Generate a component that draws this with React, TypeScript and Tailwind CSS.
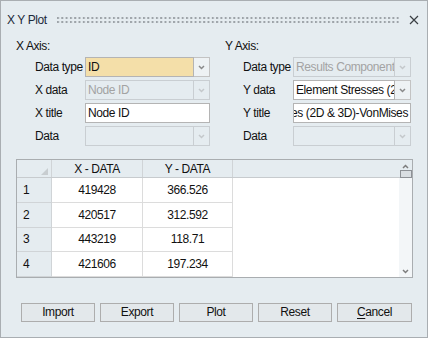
import React from "react"

const rows = [
  { n: "1", x: "419428", y: "366.526" },
  { n: "2", x: "420517", y: "312.592" },
  { n: "3", x: "443219", y: "118.71" },
  { n: "4", x: "421606", y: "197.234" },
]

function Chevron({ up = false, color = "#7a7a7a" }: { up?: boolean; color?: string }) {
  return (
    <svg width="7" height="5" viewBox="0 0 7 5" className={up ? "rotate-180" : ""}>
      <path d="M1 1 L3.5 3.5 L6 1" fill="none" stroke={color} strokeWidth="1.5" />
    </svg>
  )
}

function Combo({
  value,
  width,
  disabled = false,
  yellow = false,
}: {
  value: string
  width: string
  disabled?: boolean
  yellow?: boolean
}) {
  return (
    <div className={`flex h-[20px] ${width}`}>
      <div
        className={
          "flex-1 min-w-0 overflow-hidden whitespace-nowrap border px-[2px] leading-[18px] " +
          (disabled
            ? "border-[#c9ced2] text-[#a3a3a3]"
            : yellow
            ? "border-[#b4b4b4] bg-[#f4dfa9] text-[#111]"
            : "border-[#b4b4b4] bg-white text-[#111]")
        }
      >
        {value}
      </div>
      <div
        className={
          "flex w-[16px] shrink-0 items-center justify-center border border-l-0 " +
          (disabled ? "border-[#c9ced2]" : "border-[#c3c3c3] bg-[#eef2f4]")
        }
      >
        <Chevron color={disabled ? "#c4c8cb" : "#8a8a8a"} />
      </div>
    </div>
  )
}

function TextBox({ value, width, alignEnd = false }: { value: string; width: string; alignEnd?: boolean }) {
  return (
    <div
      className={`flex h-[20px] ${width} overflow-hidden whitespace-nowrap border border-[#b4b4b4] bg-white px-[2px] leading-[18px] text-[#111] ${
        alignEnd ? "justify-end" : ""
      }`}
    >
      <span className="shrink-0">{value}</span>
    </div>
  )
}

function Row({ label, children }: { label: string; children: React.ReactNode }) {
  return (
    <div className="flex items-center">
      <div className="w-[50px] shrink-0 whitespace-nowrap text-[#111]">{label}</div>
      {children}
    </div>
  )
}

export default function App() {
  return (
    <div className="h-[338px] w-[428px] overflow-hidden border border-[#a9aeb2] bg-[#e5ecf0] text-[12px] tracking-[-0.4px] font-['Liberation_Sans',Arial,sans-serif]">
      {/* title bar */}
      <div className="flex h-[37px] items-center pl-[6px] pr-[8px]">
        <span className="text-[12px] tracking-[-0.4px] text-[#1c2a3a]">X Y Plot</span>
        <svg className="ml-[10px] flex-1" height="6" width="100%">
          <defs>
            <pattern id="grip" width="4.3" height="4" patternUnits="userSpaceOnUse">
              <rect x="0" y="0" width="2" height="2" fill="#9da3a8" />
            </pattern>
          </defs>
          <rect x="0" y="0" width="100%" height="6" fill="url(#grip)" />
        </svg>
        <svg className="ml-[10px]" width="10" height="10" viewBox="0 0 10 10">
          <path d="M1 1 L9 9 M9 1 L1 9" stroke="#3a3f44" strokeWidth="1.2" />
        </svg>
      </div>

      {/* axis settings */}
      <div className="flex">
        <div className="w-[209px] pl-[15px]">
          <div className="h-[19px] leading-[16px] text-[#111]">X Axis:</div>
          <div className="flex flex-col gap-[3px] pl-[19px]">
            <Row label="Data type">
              <Combo value="ID" width="w-[130px]" yellow />
            </Row>
            <Row label="X data">
              <Combo value="Node ID" width="w-[130px]" disabled />
            </Row>
            <Row label="X title">
              <TextBox value="Node ID" width="w-[129px]" />
            </Row>
            <Row label="Data">
              <Combo value="" width="w-[130px]" disabled />
            </Row>
          </div>
        </div>
        <div className="flex-1 pl-[15px]">
          <div className="h-[19px] leading-[16px] text-[#111]">Y Axis:</div>
          <div className="flex flex-col gap-[3px] pl-[18px]">
            <Row label="Data type">
              <Combo value="Results Component" width="w-[118px]" disabled />
            </Row>
            <Row label="Y data">
              <Combo value="Element Stresses (2D & 3D)-VonMises" width="w-[118px]" />
            </Row>
            <Row label="Y title">
              <TextBox value="Element Stresses (2D & 3D)-VonMises" width="w-[118px]" alignEnd />
            </Row>
            <Row label="Data">
              <Combo value="" width="w-[118px]" disabled />
            </Row>
          </div>
        </div>
      </div>

      {/* table */}
      <div className="ml-[15px] mt-[13px] flex h-[119px] w-[397px] border border-[#a9adb0] bg-white">
        <div className="flex flex-1 flex-col">
          <div className="flex h-[18px] border-b border-[#c7cbce] bg-[#e5ecf0] text-[#111]">
            <div className="relative w-[35px] border-r border-[#d0d4d7]">
              <svg className="absolute bottom-[2px] right-[3px]" width="7" height="7" viewBox="0 0 7 7">
                <path d="M7 0 L7 7 L0 7 Z" fill="#c8cdd0" />
              </svg>
            </div>
            <div className="flex w-[91px] items-center justify-center border-r border-[#d0d4d7]">X - DATA</div>
            <div className="flex w-[90px] items-center justify-center border-r border-[#d0d4d7]">Y - DATA</div>
            <div className="flex-1" />
          </div>
          {rows.map((r) => (
            <div key={r.n} className="flex h-[25px] text-[#111]">
              <div className="flex w-[35px] items-center border-b border-r border-[#d0d4d7] bg-[#e5ecf0] pl-[6px]">{r.n}</div>
              <div className="flex w-[91px] items-center justify-center border-b border-r border-[#dcdcdc]">{r.x}</div>
              <div className="flex w-[90px] items-center justify-center border-b border-r border-[#dcdcdc]">{r.y}</div>
              <div className="flex-1" />
            </div>
          ))}
        </div>
        <div className="flex w-[13px] flex-col bg-[#f3f6f8]">
          <div className="flex h-[18px] flex-col items-center border-b border-[#c7cbce] bg-[#e5ecf0]">
            <div className="mt-[4px] flex">
              <Chevron up color="#7d7d7d" />
            </div>
            <div className="mt-[1px] h-[8px] w-[12px] shrink-0 border border-[#8d9196] bg-[#d9dee2]" />
          </div>
          <div className="flex-1" />
          <div className="mb-[3px] flex justify-center">
            <Chevron color="#7d7d7d" />
          </div>
        </div>
      </div>

      {/* buttons */}
      <div className="ml-[20px] mt-[25px] flex gap-[5px]">
        {["Import", "Export", "Plot", "Reset"].map((b) => (
          <button
            key={b}
            className="h-[19px] w-[74px] border border-[#adadad] bg-[#e3e8eb] leading-[17px] text-[#111]"
          >
            {b}
          </button>
        ))}
        <button className="h-[19px] w-[75px] border border-[#adadad] bg-[#e3e8eb] leading-[17px] text-[#111]">
          <span className="underline underline-offset-2">C</span>ancel
        </button>
      </div>
    </div>
  )
}
